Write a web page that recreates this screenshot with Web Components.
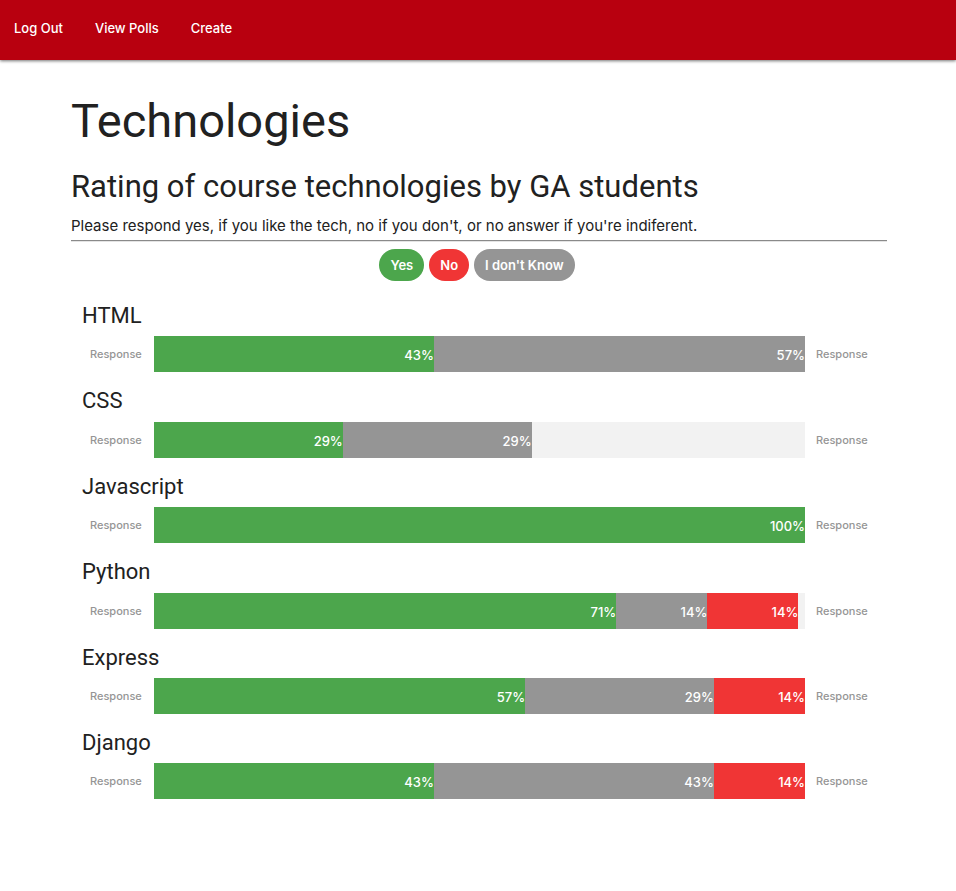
<!DOCTYPE html>
<html lang="en">
<head>
<meta charset="utf-8">
<meta name="viewport" content="width=device-width, initial-scale=1">
<title>Technologies</title>
<style>
body{margin:0;background:#fff;color:#212121;font-family:Inter,"Liberation Sans",sans-serif;font-size:15px}
</style>
</head>
<body>
<poll-page></poll-page>
<script>
const define = (name, html, setup) => {
  const template = document.createElement('template');
  template.innerHTML = html;
  customElements.define(name, class extends HTMLElement {
    constructor() {
      super();
      this.attachShadow({mode: 'open'}).append(template.content.cloneNode(true));
    }
    connectedCallback() { if (setup) setup(this, this.shadowRoot); }
  });
};

define('nav-bar', `
<style>
:host{display:block}
nav{display:flex;gap:32px;height:60px;padding:0 14px;box-sizing:border-box;background:#b8000f;box-shadow:0 1px 3px rgba(0,0,0,.55)}
a{line-height:56px;font-size:13px;font-weight:500;color:#fff;text-decoration:none}
</style>
<nav><a href="#logout">Log Out</a><a href="#polls">View Polls</a><a href="#create">Create</a></nav>`);

define('legend-button', `
<style>
:host{display:block}
button{display:block;height:32px;padding:0 11px;border:0;border-radius:16px;font:600 13px/32px Inter,"Liberation Sans",sans-serif;color:#fff;background:#959595}
:host([tone=yes]) button{background:#4ca64c}
:host([tone=no]) button{background:#f03535}
</style>
<button type="button"><slot></slot></button>`);

define('result-segment', `
<style>
:host{display:block;box-sizing:border-box;background:#959595;color:#fff;font-size:13px;font-weight:500;line-height:38px;height:36px;text-align:right}
:host([tone=yes]){background:#4ca64c}
:host([tone=no]){background:#f03535}
</style>
<span></span>`, (host, root) => {
  const value = host.getAttribute('value') + '%';
  host.style.width = value;
  root.querySelector('span').textContent = value;
});

define('result-row', `
<style>
:host{display:block}
h2{margin:0 0 7px 11px;font-family:Roboto,"Liberation Sans",sans-serif;font-weight:400;font-size:22px;line-height:1.2}
.row{display:flex;align-items:center;gap:11px;padding:0 18px 0 19px}
small{width:53px;flex:none;font-size:11px;font-weight:500;color:#959595;line-height:16px}
.bar{flex:1;display:flex;height:36px;background:#f2f2f2}
</style>
<h2></h2>
<div class="row"><small>Response</small><div class="bar"><slot></slot></div><small>Response</small></div>`, (host, root) => {
  root.querySelector('h2').textContent = host.getAttribute('name');
});

define('poll-page', `
<style>
:host{display:block}
main{padding:31px 69px 60px 71px}
h1{margin:0;font-family:Roboto,"Liberation Sans",sans-serif;font-weight:400;font-size:47px;line-height:60px}
.sub{margin:16px 0 0;font-family:Roboto,"Liberation Sans",sans-serif;font-weight:400;font-size:31px;line-height:40px}
p{margin:7px 0 0;line-height:24px}
hr{margin:2px 0 7px;border:0;border-top:1px solid #8a8a8a;border-bottom:1px solid #e4e4e4}
.legend{display:flex;justify-content:center;gap:5px;margin-right:4px}
.rows{display:grid;gap:16px;padding-top:22px}
</style>
<nav-bar></nav-bar>
<main>
<h1>Technologies</h1>
<h2 class="sub">Rating of course technologies by GA students</h2>
<p>Please respond yes, if you like the tech, no if you don't, or no answer if you're indiferent.</p>
<hr>
<div class="legend"><legend-button tone="yes">Yes</legend-button><legend-button tone="no">No</legend-button><legend-button>I don't Know</legend-button></div>
<div class="rows">
<result-row name="HTML"><result-segment tone="yes" value="43"></result-segment><result-segment value="57"></result-segment></result-row>
<result-row name="CSS"><result-segment tone="yes" value="29"></result-segment><result-segment value="29"></result-segment></result-row>
<result-row name="Javascript"><result-segment tone="yes" value="100"></result-segment></result-row>
<result-row name="Python"><result-segment tone="yes" value="71"></result-segment><result-segment value="14"></result-segment><result-segment tone="no" value="14"></result-segment></result-row>
<result-row name="Express"><result-segment tone="yes" value="57"></result-segment><result-segment value="29"></result-segment><result-segment tone="no" value="14"></result-segment></result-row>
<result-row name="Django"><result-segment tone="yes" value="43"></result-segment><result-segment value="43"></result-segment><result-segment tone="no" value="14"></result-segment></result-row>
</div>
</main>`);
</script>
</body>
</html>
